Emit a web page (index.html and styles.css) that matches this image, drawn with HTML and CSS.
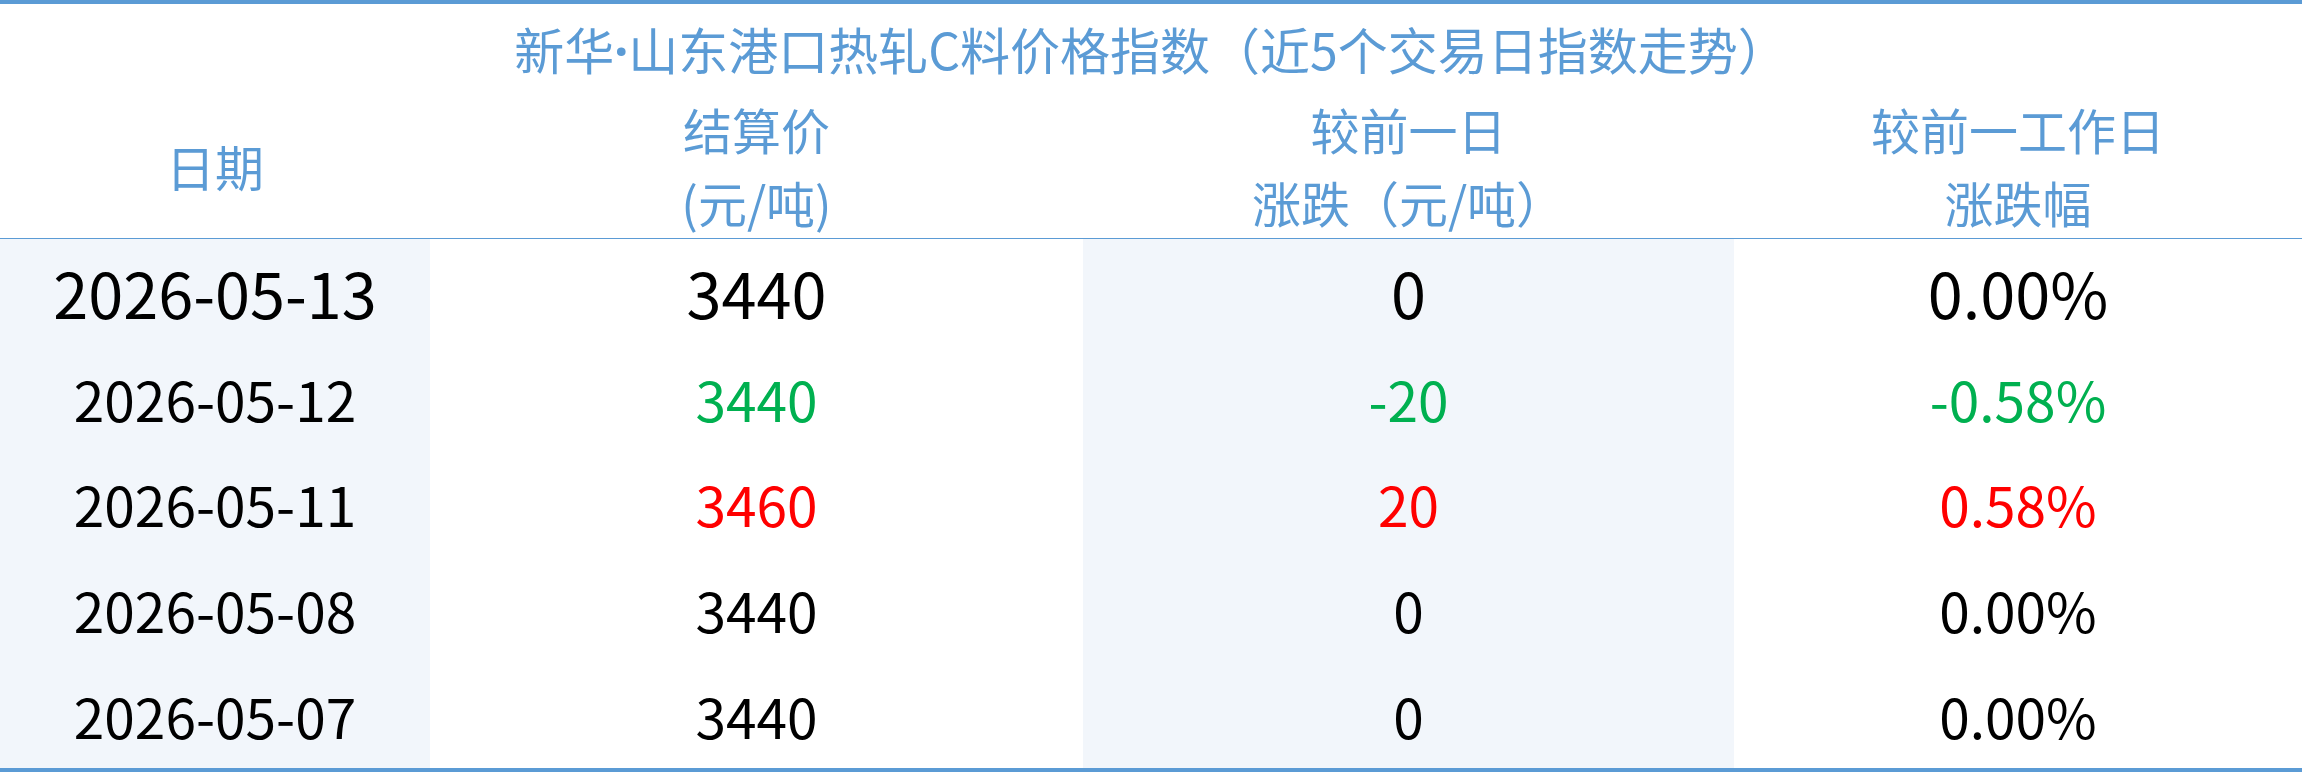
FILE: index.html
```html
<!DOCTYPE html>
<html lang="zh-CN">
<head>
<meta charset="utf-8">
<title>新华·山东港口热轧C料价格指数</title>
<link rel="stylesheet" href="styles.css">
</head>
<body>
<div class="board">
  <div class="title">新华<span class="dot">·</span>山东港口热轧C料价格指数（近5个交易日指数走势）</div>
  <table class="grid">
    <colgroup>
      <col class="c1"><col class="c2"><col class="c3"><col class="c4">
    </colgroup>
    <thead>
      <tr>
        <th>日期</th>
        <th>结算价<br>(元/吨)</th>
        <th>较前一日<br>涨跌（元/吨）</th>
        <th>较前一工作日<br>涨跌幅</th>
      </tr>
    </thead>
    <tbody>
      <tr class="lead">
        <td class="shade">2026-05-13</td><td>3440</td><td class="shade">0</td><td>0.00%</td>
      </tr>
      <tr>
        <td class="shade">2026-05-12</td><td class="down">3440</td><td class="shade down">-20</td><td class="down">-0.58%</td>
      </tr>
      <tr>
        <td class="shade">2026-05-11</td><td class="up">3460</td><td class="shade up">20</td><td class="up">0.58%</td>
      </tr>
      <tr>
        <td class="shade">2026-05-08</td><td>3440</td><td class="shade">0</td><td>0.00%</td>
      </tr>
      <tr>
        <td class="shade">2026-05-07</td><td>3440</td><td class="shade">0</td><td>0.00%</td>
      </tr>
    </tbody>
  </table>
</div>
</body>
</html>
```
FILE: styles.css
```css
html, body {
  margin: 0;
  padding: 0;
  background: #ffffff;
}
body {
  width: 2302px;
  height: 772px;
  overflow: hidden;
  font-family: "Noto Sans CJK SC", "Noto Sans", sans-serif;
}
.board {
  width: 2302px;
  height: 772px;
  box-sizing: border-box;
  border-top: 4px solid #5b9bd5;
  border-bottom: 4px solid #5b9bd5;
  display: flex;
  flex-direction: column;
}
.title {
  height: 88px;
  line-height: 88px;
  text-align: center;
  color: #5b9bd5;
  font-size: 50px;
  white-space: nowrap;
}
.title .dot {
  font-family: "Noto Sans", "DejaVu Sans", sans-serif;
  font-weight: bold;
}
.grid {
  width: 2302px;
  flex: 1;
  border-collapse: collapse;
  table-layout: fixed;
}
.c1 { width: 430px; }
.c2 { width: 653px; }
.c3 { width: 651px; }
.c4 { width: 568px; }
.grid th {
  font-weight: normal;
  color: #5b9bd5;
  font-size: 49px;
  line-height: 73px;
  height: 146px;
  padding: 0;
  text-align: center;
  vertical-align: middle;
  border-bottom: 1px solid #5b9bd5;
  white-space: nowrap;
}
.grid td {
  padding: 0;
  text-align: center;
  vertical-align: middle;
  font-size: 55px;
  color: #000000;
  height: 105px;
  white-space: nowrap;
}
.grid tr.lead td {
  font-size: 63px;
}
.grid td.shade {
  background: #f2f6fb;
}
.grid td.down {
  color: #00b050;
}
.grid td.up {
  color: #ff0000;
}
```
